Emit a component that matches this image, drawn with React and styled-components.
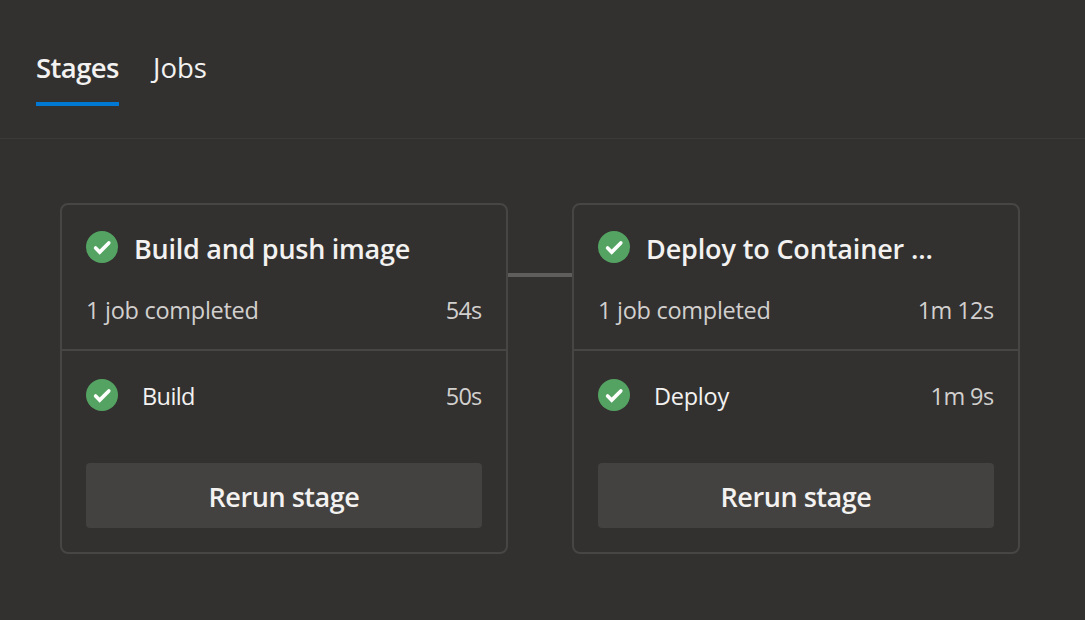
import React from "react";
import styled, { createGlobalStyle } from "styled-components";

const GlobalStyle = createGlobalStyle`
  * { box-sizing: border-box; }
  body {
    margin: 0;
    background: #323130;
    font-family: "Segoe UI", "Open Sans", "Noto Sans", sans-serif;
    color: #f3f2f1;
  }
`;

const Page = styled.main`
  height: 620px;
  overflow: hidden;
  background: #323130;
`;

const TabBar = styled.nav`
  display: flex;
  gap: 34px;
  height: 139px;
  padding: 32px 36px 0;
  border-bottom: 1px solid #3b3a39;
`;

const Tab = styled.div`
  display: flex;
  align-items: center;
  height: 74px;
  width: ${(p) => p.$width}px;
  padding-top: 1px;
  border-bottom: 4px solid ${(p) => (p.$active ? "#0078d4" : "transparent")};
  font-size: 27.5px;
  font-weight: ${(p) => (p.$active ? 600 : 400)};
  white-space: nowrap;
`;

const Label = styled.span`
  flex: none;
  white-space: pre;
  letter-spacing: ${(p) => p.$tracking || 0}px;
`;

const Stages = styled.section`
  display: flex;
  align-items: flex-start;
  padding: 64px 60px;
`;

const Connector = styled.div`
  flex: none;
  width: 64px;
  height: 4px;
  margin-top: 70px;
  background: #605e5c;
`;

const Card = styled.article`
  flex: none;
  width: 448px;
  height: 351px;
  border: 2px solid #484644;
  border-radius: 8px;
`;

const CardHeader = styled.header`
  height: 146px;
  padding: 25px 24px 0;
  border-bottom: 2px solid #484644;
`;

const TitleRow = styled.div`
  display: flex;
  align-items: center;
  gap: 16px;
  height: 36px;
  font-size: 27px;
  font-weight: 600;
`;

const DetailRow = styled.div`
  display: flex;
  align-items: center;
  justify-content: space-between;
  height: 32px;
  margin-top: 28px;
  font-size: 23.5px;
  color: #d2d0ce;
`;

const CardBody = styled.div`
  padding: 26px 24px 0;
`;

const JobRow = styled.div`
  display: flex;
  align-items: center;
  gap: 24px;
  height: 37px;
  font-size: 23.5px;
`;

const Duration = styled.span`
  margin-left: auto;
  padding-right: 0.5px;
  color: #d2d0ce;
  letter-spacing: ${(p) => p.$tracking || 0}px;
`;

const RerunButton = styled.button`
  display: flex;
  align-items: center;
  justify-content: center;
  width: 396px;
  height: 65px;
  margin-top: 49px;
  padding: 2px 0 0;
  border: 0;
  border-radius: 4px;
  background: #434240;
  color: #f3f2f1;
  font: 600 27px "Segoe UI", "Open Sans", "Noto Sans", sans-serif;
`;

const StatusSvg = styled.svg`
  flex: none;
  width: 32px;
  height: 32px;
  margin-bottom: ${(p) => p.$lift}px;
`;

function Success({ lift }) {
  return (
    <StatusSvg viewBox="0 0 32 32" $lift={lift}>
      <circle cx="16" cy="16" r="16" fill="#55a362" />
      <path
        d="M9.6 17 13.7 21.1 22.8 11.9"
        fill="none"
        stroke="#fff"
        strokeWidth="3.6"
        strokeLinecap="round"
      />
    </StatusSvg>
  );
}

const stages = [
  {
    title: "Build and push image", titleTracking: -0.26,
    total: "54s", totalTracking: -0.8,
    job: "Build", jobTracking: -0.6,
    time: "50s", timeTracking: -0.8,
  },
  {
    title: "Deploy to Container ...", titleTracking: -0.14,
    total: "1m 12s", totalTracking: -0.6,
    job: "Deploy", jobTracking: -0.25,
    time: "1m 9s", timeTracking: -0.6,
  },
];

function Stage({ stage }) {
  return (
    <Card>
      <CardHeader>
        <TitleRow>
          <Success lift={2} />
          <Label $tracking={stage.titleTracking}>{stage.title}</Label>
        </TitleRow>
        <DetailRow>
          <Label $tracking={-0.27}>1 job completed</Label>
          <Duration $tracking={stage.totalTracking}>{stage.total}</Duration>
        </DetailRow>
      </CardHeader>
      <CardBody>
        <JobRow>
          <Success lift={1} />
          <Label $tracking={stage.jobTracking}>{stage.job}</Label>
          <Duration $tracking={stage.timeTracking}>{stage.time}</Duration>
        </JobRow>
        <RerunButton>
          <Label $tracking={-0.45}>Rerun stage</Label>
        </RerunButton>
      </CardBody>
    </Card>
  );
}

export default function App() {
  return (
    <Page>
      <GlobalStyle />
      <TabBar>
        <Tab $active $width={83}>
          <Label $tracking={-0.6}>Stages</Label>
        </Tab>
        <Tab $width={56}>
          <Label>Jobs</Label>
        </Tab>
      </TabBar>
      <Stages>
        <Stage stage={stages[0]} />
        <Connector />
        <Stage stage={stages[1]} />
      </Stages>
    </Page>
  );
}
